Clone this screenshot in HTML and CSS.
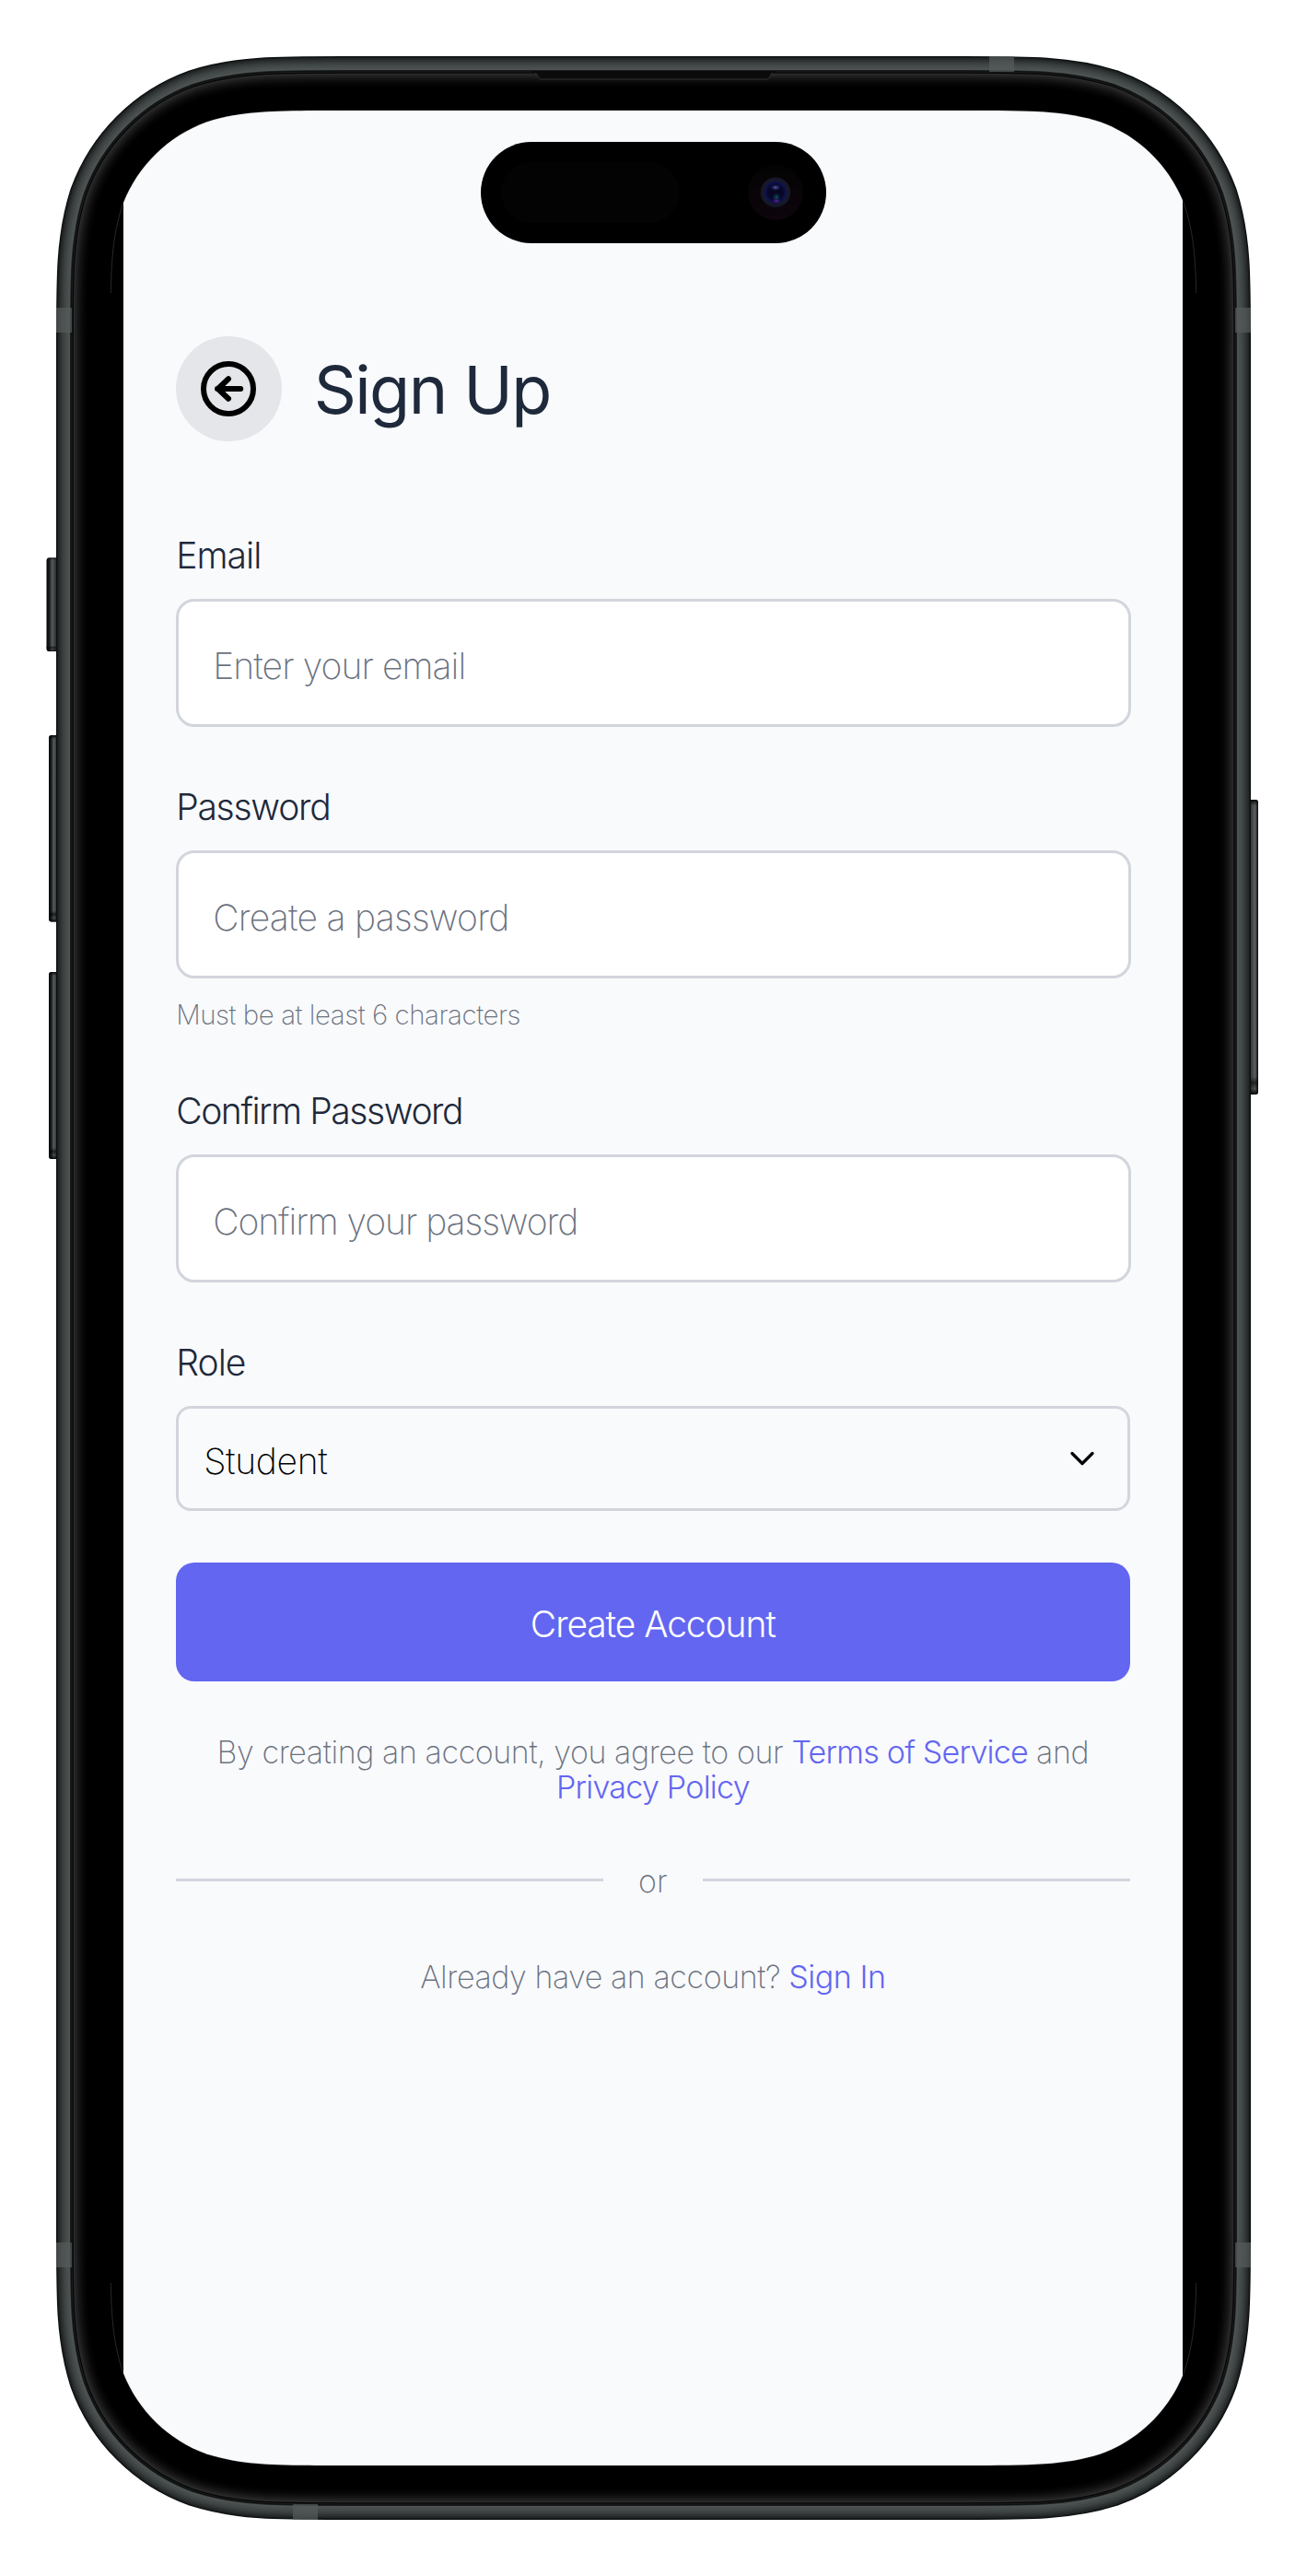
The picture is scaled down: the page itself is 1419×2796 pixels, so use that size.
FILE: index.html
```html
<!DOCTYPE html>
<html lang="en">
<head>
<meta charset="utf-8">
<title>Sign Up</title>
<link rel="stylesheet" href="styles.css">
</head>
<body>
<main class="phone">
  <svg class="phone-frame" viewBox="0 0 1419 2796" aria-hidden="true">
    <defs>
      <path id="display" d="M372.2 120H1046.8C1119.4 120 1155.7 120 1194.8 132.4C1237.5 147.9 1271.1 181.5 1286.6 224.2C1299 263.3 1299 299.6 1299 372.2V2423.8C1299 2496.4 1299 2532.7 1286.6 2571.8C1271.1 2614.5 1237.5 2648.1 1194.8 2663.6C1155.7 2676 1119.4 2676 1046.8 2676H372.2C299.6 2676 263.3 2676 224.2 2663.6C181.5 2648.1 147.9 2614.5 132.4 2571.8C120 2532.7 120 2496.4 120 2423.8V372.2C120 299.6 120 263.3 132.4 224.2C147.9 181.5 181.5 147.9 224.2 132.4C263.3 120 299.6 120 372.2 120Z"/>
      <clipPath id="screen-clip"><rect x="134" y="110" width="1150" height="2580"/></clipPath>
      <clipPath id="corner-clip"><path d="M110 110H1310V318H110ZM110 2478H1310V2690H110Z"/></clipPath>
      <linearGradient id="btn-left"><stop offset="0" stop-color="#050707"/><stop offset=".2" stop-color="#151919"/><stop offset=".45" stop-color="#555b5b"/><stop offset=".65" stop-color="#353b3b"/><stop offset="1" stop-color="#1b2020"/></linearGradient>
      <linearGradient id="btn-right"><stop offset="0" stop-color="#1b2020"/><stop offset=".35" stop-color="#3c4040"/><stop offset=".7" stop-color="#5b5f5f"/><stop offset="1" stop-color="#050707"/></linearGradient>
      <linearGradient id="btn-shade" x2="0" y2="1"><stop offset="0" stop-opacity=".9"/><stop offset=".02" stop-opacity="0"/><stop offset=".94" stop-opacity="0"/><stop offset=".96" stop-opacity=".6"/><stop offset=".98" stop-opacity=".1"/><stop offset="1" stop-opacity=".9"/></linearGradient>
      <linearGradient id="sensor" x2="0" y2="1"><stop offset="0" stop-color="#030303"/><stop offset="1" stop-color="#0e050d"/></linearGradient>
      <radialGradient id="lens"><stop offset="0" stop-color="#080820"/><stop offset=".6" stop-color="#060626"/><stop offset=".9" stop-color="#0e1150"/><stop offset="1" stop-color="#171a2e"/></radialGradient>
      <radialGradient id="glint-top"><stop offset="0" stop-color="#5a62ad"/><stop offset="1" stop-color="#20265c" stop-opacity="0"/></radialGradient>
      <radialGradient id="glint-teal"><stop offset="0" stop-color="#0f5a63"/><stop offset="1" stop-color="#0a2038" stop-opacity="0"/></radialGradient>
      <radialGradient id="glint-purple"><stop offset="0" stop-color="#6a25a0"/><stop offset="1" stop-color="#2a1060" stop-opacity="0"/></radialGradient>
    </defs>

    <!-- side buttons -->
    <g fill="url(#btn-left)">
      <rect x="50.5" y="605.500" width="14" height="101.500" rx="3"/>
      <rect x="53" y="798" width="12" height="202.500" rx="3"/>
      <rect x="53" y="1055" width="12" height="203" rx="3"/>
    </g>
    <rect x="1355" y="868" width="11" height="320" rx="3" fill="url(#btn-right)"/>
    <g fill="url(#btn-shade)">
      <rect x="50.5" y="605.500" width="14" height="101.500" rx="3"/>
      <rect x="53" y="798" width="12" height="202.500" rx="3"/>
      <rect x="53" y="1055" width="12" height="203" rx="3"/>
      <rect x="1355" y="868" width="11" height="320" rx="3"/>
    </g>

    <!-- titanium band and bezel, from the outer edge inwards -->
    <g fill="none">
      <use href="#display" stroke="#0c0f0f" stroke-width="118"/>
      <use href="#display" stroke="#171b1b" stroke-width="116"/>
      <use href="#display" stroke="#222626" stroke-width="114"/>
      <use href="#display" stroke="#2c3030" stroke-width="111"/>
      <use href="#display" stroke="#363a3a" stroke-width="107"/>
      <use href="#display" stroke="#3e4343" stroke-width="103"/>
      <use href="#display" stroke="#464b4b" stroke-width="98"/>
      <use href="#display" stroke="#4c5151" stroke-width="93"/>
      <use href="#display" stroke="#202323" stroke-width="88"/>
      <use href="#display" stroke="#0a0b0b" stroke-width="86.5"/>
      <use href="#display" stroke="#1c1e1e" stroke-width="85"/>
      <use href="#display" stroke="#060606" stroke-width="83"/>
      <use href="#display" stroke="#2b2b2b" stroke-width="80.5"/>
      <use href="#display" stroke="#242424" stroke-width="78"/>
      <use href="#display" stroke="#1e1e1e" stroke-width="75"/>
      <use href="#display" stroke="#181818" stroke-width="72"/>
      <use href="#display" stroke="#121212" stroke-width="69"/>
      <use href="#display" stroke="#0c0c0c" stroke-width="65"/>
      <use href="#display" stroke="#070707" stroke-width="61"/>
      <use href="#display" stroke="#030303" stroke-width="57"/>
      <use href="#display" stroke="#000" stroke-width="52"/>
    </g>
    <use href="#display" fill="#000"/>
    <use href="#display" fill="none" stroke="#666" stroke-width=".4" clip-path="url(#corner-clip)"/>
    <use href="#display" fill="#f9fafc" clip-path="url(#screen-clip)"/>

    <!-- antenna lines -->
    <g fill="#565b5b" fill-opacity=".7">
      <rect x="61" y="334" width="17" height="27"/><rect x="1341" y="334" width="17" height="27"/>
      <rect x="61" y="2434" width="17" height="27"/><rect x="1341" y="2434" width="17" height="27"/>
      <rect x="1074" y="61" width="27" height="17"/><rect x="318" y="2718" width="27" height="17"/>
    </g>

    <!-- speaker slot -->
    <path d="M580 78.500Q583 79 584 83Q585 86 588 86H832Q835 86 836 83Q837 79 840 78.500Z" fill="#0b0b0b" stroke="#303030"/>
    <path d="M578 78H842" stroke="#0a0a0a" stroke-width="2"/>

    <!-- dynamic island -->
    <rect x="522" y="154" width="375" height="110" rx="55"/>
    <rect x="544" y="176" width="194" height="66" rx="33" fill="#030303"/>
    <circle cx="842" cy="208.700" r="30" fill="url(#sensor)"/>
    <circle cx="842" cy="208.700" r="16.300" fill="#161829"/>
    <circle cx="842" cy="208.700" r="12.500" fill="url(#lens)"/>
    <ellipse cx="842" cy="203.500" rx="6" ry="3.500" fill="url(#glint-top)"/>
    <circle cx="843" cy="214" r="5" fill="url(#glint-teal)"/>
    <ellipse cx="843" cy="218" rx="5" ry="3" fill="url(#glint-purple)"/>
  </svg>

  <div class="screen">
    <header class="header">
      <button class="back" type="button" aria-label="Back">
        <svg width="72" height="72" viewBox="0 0 24 24" fill="none" stroke="#000" stroke-width="2" stroke-linecap="round" stroke-linejoin="round"><circle cx="12" cy="12" r="9"/><path d="M16.400 12H8M12 8.400 8.200 12l3.800 3.600"/></svg>
      </button>
      <h1 class="title">Sign Up</h1>
    </header>

    <form class="form">
      <div class="field">
        <label class="label label-email" for="email">Email</label>
        <input class="input input-email" id="email" type="email" placeholder="Enter your email">
      </div>
      <div class="field">
        <label class="label label-password" for="password">Password</label>
        <input class="input input-password" id="password" type="password" placeholder="Create a password">
        <p class="hint">Must be at least 6 characters</p>
      </div>
      <div class="field">
        <label class="label label-confirm" for="confirm">Confirm Password</label>
        <input class="input input-confirm" id="confirm" type="password" placeholder="Confirm your password">
      </div>
      <div class="field">
        <span class="label label-role">Role</span>
        <div class="select">
          <span>Student</span>
          <svg width="30" height="20" viewBox="0 0 30 20" fill="none" stroke="#000" stroke-width="3.300" stroke-linecap="round" stroke-linejoin="round"><path d="M4 4.500 15 15.500 26 4.500"/></svg>
        </div>
      </div>
      <button class="submit" type="button">Create Account</button>
    </form>

    <p class="terms">By creating an account, you agree to our <a class="link link-terms">Terms of Service</a> and<br><a class="link link-privacy">Privacy Policy</a></p>
    <div class="divider"><span class="or">or</span></div>
    <p class="signin">Already have an account? <a class="link link-signin">Sign In</a></p>
  </div>
</main>
</body>
</html>
```
FILE: styles.css
```css
* { box-sizing: border-box; }

body {
  margin: 0;
  background: #fff;
  font-family: Inter, "Liberation Sans", sans-serif;
  font-weight: 200;
}

p, h1 { margin: 0; }

.phone {
  position: relative;
  width: 1419px;
  height: 2796px;
  overflow: hidden;
}

.phone-frame {
  position: absolute;
  inset: 0;
  width: 1419px;
  height: 2796px;
}

.screen {
  position: relative;
  display: flex;
  flex-direction: column;
  padding: 364.500px 192.500px 0 191.200px;
}

.header {
  display: flex;
  align-items: center;
  gap: 35px;
  height: 114.500px;
}

.back {
  display: grid;
  place-items: center;
  width: 114.500px;
  height: 114.500px;
  padding: 0;
  border: 0;
  border-radius: 50%;
  background: #e5e6ea;
}

.title {
  padding-top: 2px;
  font-size: 72px;
  font-weight: 400;
  line-height: 88px;
  letter-spacing: -1.6px;
  color: #1e293b;
}

.form {
  display: flex;
  flex-direction: column;
  gap: 62.800px;
  padding-top: 99.500px;
}

.field {
  display: flex;
  flex-direction: column;
}

.label {
  margin-bottom: 23px;
  font-size: 39px;
  font-weight: 270;
  line-height: 48px;
  color: #1e293b;
}

.label-email { letter-spacing: -.95px; }
.label-password { letter-spacing: -1.25px; }
.label-confirm { letter-spacing: -1.42px; }
.label-role { letter-spacing: -.95px; }

.input {
  width: 1036.500px;
  height: 139.500px;
  padding: 6.500px 37px 0;
  border: 3px solid #d3d5dd;
  border-radius: 20px;
  background: #fff;
  font: 200 39px Inter, "Liberation Sans", sans-serif;
  color: #1e293b;
}

.input::placeholder { color: #6b7280; opacity: 1; }
.input-email { letter-spacing: -.9px; }
.input-password { letter-spacing: -.73px; }
.input-confirm { letter-spacing: -1.03px; }

.hint {
  margin-top: 20.500px;
  font-size: 29.500px;
  line-height: 36px;
  letter-spacing: -.46px;
  color: #6b7280;
}

.select {
  display: flex;
  align-items: center;
  justify-content: space-between;
  height: 114.500px;
  padding: 0 34px 0 27px;
  border: 3px solid #d3d5dd;
  border-radius: 16px;
  font-size: 39px;
  letter-spacing: -.33px;
  color: #000;
}

.select span { padding-top: 4.500px; }

.submit {
  height: 129px;
  margin-top: -6.800px;
  padding: 4px 0 0;
  border: 0;
  border-radius: 20px;
  background: #6366f1;
  font: 270 39px Inter, "Liberation Sans", sans-serif;
  letter-spacing: -1.1px;
  color: #fff;
}

.terms, .signin, .or {
  font-size: 34px;
  line-height: 38.400px;
  text-align: center;
  color: #6b7280;
}

.terms {
  margin-top: 57.500px;
  letter-spacing: -.41px;
}

.link {
  font-weight: 270;
  color: #6366f1;
}

.link-terms { letter-spacing: -.78px; }
.link-privacy { letter-spacing: -.75px; }
.link-signin { letter-spacing: -.45px; }

.divider {
  display: flex;
  align-items: center;
  gap: 38px;
  margin-top: 60px;
}

.or { padding-top: 3px; }

.divider::before,
.divider::after {
  content: "";
  flex: 1;
  height: 3px;
  background: #d3d5dd;
}

.signin {
  margin-top: 65.500px;
  letter-spacing: -.43px;
}
```
